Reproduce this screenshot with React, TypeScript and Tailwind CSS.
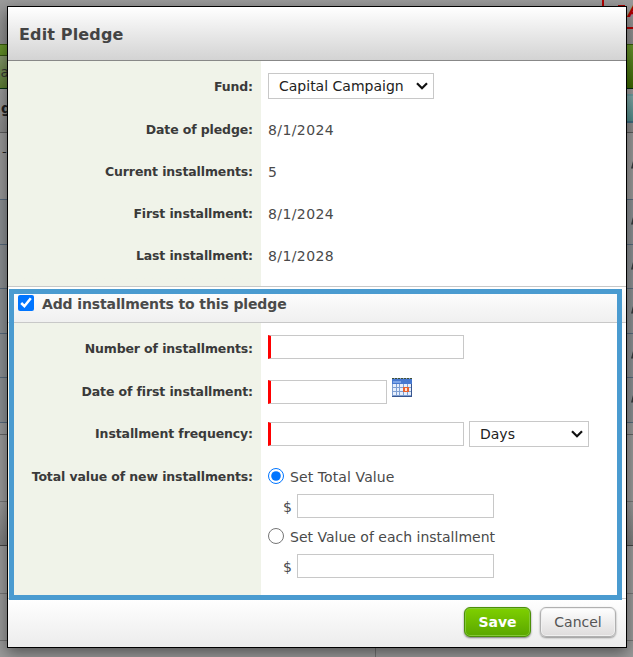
import React from "react";
import clsx from "clsx";

interface FieldProps {
  label: string;
  className: string;
  labelClass?: string;
  children: React.ReactNode;
}

interface BackdropRow {
  className: string;
  left?: string;
  pencil?: boolean;
}

// Ledger page dimmed behind the dialog, below the tab bar
const backdropRows: BackdropRow[] = [
  { className: "h-[67px] border-[#56697c] bg-[#989898]", left: "-", pencil: true },
  { className: "h-[45px] border-[#56697c] bg-[#8b8f92]", pencil: true },
  { className: "h-[44px] border-[#56697c] bg-[#8b8f92]", pencil: true },
  { className: "h-[45px] border-[#56697c] bg-[#8b8f92]", pencil: true },
  { className: "h-[44px] border-[#56697c] bg-[#8b8f92]", pencil: true },
  { className: "h-[45px] border-[#56697c] bg-[#8b8f92]", pencil: true },
  { className: "h-[12px] border-[#656565] bg-[#989898]" },
  { className: "h-[67px] border-[#777] bg-[#9a9a9a]" },
  { className: "h-[44px] border-[#444] bg-linear-to-b from-[#9a9a9a] to-[#7c7c7c]" },
  { className: "h-[48px] border-[#777] bg-[#9a9a9a]" },
  { className: "h-[47px] border-[#737373] bg-[#9a9a9a]" },
];

const Backdrop = () => (
  <div className="flex h-[657px] flex-col overflow-hidden">
    <div className="flex h-[44px] shrink-0 justify-end bg-linear-to-b from-[#9b9b9b] to-[#8c8c8c]">
      <div className="flex h-[29px] w-[31px] gap-[3px] overflow-hidden border-b-2 border-l-2 border-[#b00000] pl-[14px] text-[17px] leading-[22px] font-bold whitespace-nowrap text-[#b00000]">
        <span className="mt-[5px] h-[2px] w-[7px] shrink-0 bg-[#a50000]" />
        <span className="italic">A</span>
      </div>
    </div>
    <div className="flex h-[45px] shrink-0 overflow-hidden border-y border-t-[#385e09] border-b-[#012b13] bg-linear-to-b from-[#68952c] to-[#3b6600]">
      <div className="mt-[10px] w-[8px] border-t border-[#304f0e] bg-linear-to-b from-[#84966b] to-[#5b7d31] text-[14px] leading-[32px] text-[#333]">
        <span className="-ml-[8px] tracking-[-0.5px]">ga</span>
      </div>
    </div>
    <div className="flex h-[44px] shrink-0 items-center justify-between overflow-hidden border-b border-[#5c5c5c] bg-linear-to-b from-[#9b9b9b] to-[#8a8a8a]">
      <span className="-mt-[4px] pl-px text-[14px] font-bold text-[#222] underline">g</span>
      <span className="-mt-[4px] h-[29px] w-[6px] border-y-2 border-y-[#6c9da0] border-b-[#3e6b80] bg-linear-to-b from-[#7fa7a6] to-[#4e8a88]" />
    </div>
    {backdropRows.map((row, i) => (
      <div
        key={i}
        className={clsx("flex shrink-0 items-center justify-between border-b", row.className)}
      >
        <span className="-mt-[28px] w-[8px] pl-[2px] text-[13px] text-[#222]">{row.left}</span>
        {row.pencil && (
          <svg width="2" height="8" viewBox="0 0 2 8" className="-mt-[2px]">
            <path d="M2 0L0 7.5H2Z" fill="#35393b" />
          </svg>
        )}
      </div>
    ))}
    <div className="flex grow bg-[#9a9a9a]">
      <div className="w-[376px] border-r border-[#737373]" />
    </div>
  </div>
);

const Field = ({ label, className, labelClass = "items-center", children }: FieldProps) => (
  <div className={clsx("flex", className)}>
    <div
      className={clsx(
        "flex w-[253px] shrink-0 justify-end bg-[#f0f3e9] pr-[8px] text-[12.5px] font-bold tracking-[-0.12px] whitespace-nowrap text-[#3a3a3a]",
        labelClass
      )}
    >
      {label}
    </div>
    <div className="flex grow items-center pl-[7px]">{children}</div>
  </div>
);

const Select = ({ value, className }: { value: string; className: string }) => (
  <button
    className={clsx(
      "flex h-[26px] items-center justify-between border border-[#c8c8c8] bg-white pr-[5px] pl-[10px] text-[14px] text-[#222]",
      className
    )}
  >
    <span className="pt-px">{value}</span>
    <svg width="12" height="8" viewBox="0 0 12 8" fill="none">
      <path d="M1 1.2L6 6.2L11 1.2" stroke="#111" strokeWidth="2.2" />
    </svg>
  </button>
);

const TextInput = ({ className, required }: { className: string; required?: boolean }) => (
  <input
    type="text"
    className={clsx(
      "h-[24px] border border-[#c8c8c8] bg-white px-1 text-[14px] outline-none",
      required && "border-l-3 border-l-[#f00]",
      className
    )}
  />
);

const CalendarIcon = () => (
  <svg width="20" height="19" viewBox="0 0 20 19" className="mb-[9px] ml-[5px]" shapeRendering="crispEdges">
    <rect width="20" height="19" fill="#38558e" />
    <rect width="19" height="18" fill="#7f9fd2" />
    <rect y="1" width="20" height="5" fill="#4678d0" />
    <rect x="1" y="3" width="8" height="2" fill="#7ba3e6" />
    <path d="M0 .5H20" stroke="#405132" strokeDasharray="2 1" />
    {[6, 10, 14].map((y) =>
      [1, 5, 8, 12, 16].map((x) => (
        <rect key={`${x}-${y}`} x={x} y={y} width={x === 5 ? 2 : 3} height="3" fill="#e6eefc" />
      ))
    )}
    <rect x="11" y="9" width="6" height="5" fill="#e8622f" />
    <rect x="13" y="10" width="2" height="3" fill="#ffe0d2" />
  </svg>
);

export default function App() {
  return (
    <div className="relative h-[657px] w-[633px] overflow-hidden font-['DejaVu_Sans',Verdana,sans-serif] text-[14px] text-[#4a4a4a]">
      <Backdrop />

      <div className="absolute top-[6px] left-[7px] flex h-[642px] w-[620px] flex-col border border-black bg-white shadow-[0_5px_14px_0_rgba(0,0,0,0.45)]">
        {/* Header */}
        <div className="flex h-[54px] shrink-0 items-center border-b border-[#888] bg-linear-to-b from-white to-[#d3d3d3] pl-[11px]">
          <h2 className="mt-[2px] text-[16px] font-bold tracking-[0.15px] text-[#444]">Edit Pledge</h2>
        </div>

        {/* Current pledge */}
        <div className="h-[226px] shrink-0 border-b border-[#c8c8c8] bg-linear-to-r from-[#f0f3e9] from-[253px] to-white to-[253px] pt-[4px] tracking-[0.4px]">
          <Field label="Fund:" className="h-[42px]" labelClass="items-center pt-[2px]">
            <Select value="Capital Campaign" className="w-[166px] tracking-normal" />
          </Field>
          <Field label="Date of pledge:" className="h-[45px]" labelClass="items-center pt-[2px]">
            <span className="pt-[2px]">8/1/2024</span>
          </Field>
          <Field label="Current installments:" className="h-[40px]">5</Field>
          <Field label="First installment:" className="h-[44px]" labelClass="items-center pt-px">
            <span className="pt-px">8/1/2024</span>
          </Field>
          <Field label="Last installment:" className="h-[41px]">8/1/2028</Field>
        </div>

        {/* New installments */}
        <div className="flex h-[36px] shrink-0 items-center border-b border-[#c8c8c8] bg-linear-to-b from-white to-[#f0f0f0] pl-[10px] text-[14px] font-bold tracking-[-0.12px]">
          <input type="checkbox" defaultChecked className="mt-[-3px] mr-[8px] h-4 w-4" />
          <span className="-mt-[1px]">Add installments to this pledge</span>
        </div>
        <Field label="Number of installments:" className="h-[48px] shrink-0" labelClass="items-center pt-[4px]">
          <TextInput required className="w-[196px]" />
        </Field>
        <Field label="Date of first installment:" className="h-[42px] shrink-0">
          <TextInput required className="w-[119px]" />
          <CalendarIcon />
        </Field>
        <Field label="Installment frequency:" className="h-[42px] shrink-0">
          <TextInput required className="w-[196px]" />
          <Select value="Days" className="ml-[5px] w-[120px]" />
        </Field>
        <Field
          label="Total value of new installments:"
          className="h-[143px] shrink-0"
          labelClass="items-start pt-[13px]"
        >
          <div className="flex flex-col self-start pt-[11px]">
            <label className="flex h-[20px] items-center gap-[6px]">
              <input type="radio" name="value" defaultChecked className="h-4 w-4" />
              <span className="pt-[2px] tracking-[0.1px]">Set Total Value</span>
            </label>
            <div className="flex h-[40px] items-center gap-[5px] pl-[15px]">
              <span className="w-[9px] pt-[2px]">$</span>
              <TextInput className="w-[197px]" />
            </div>
            <label className="flex h-[20px] items-center gap-[6px]">
              <input type="radio" name="value" className="h-4 w-4" />
              <span className="pt-[2px]">Set Value of each installment</span>
            </label>
            <div className="flex h-[40px] items-center gap-[5px] pl-[15px]">
              <span className="w-[9px] pt-[2px]">$</span>
              <TextInput className="w-[197px]" />
            </div>
          </div>
        </Field>

        {/* Footer */}
        <div className="flex grow items-start justify-end gap-[9px] border-t border-[#c8c8c8] bg-linear-to-b from-white to-[#ececec] pt-[8px] pr-[10px]">
          <button className="h-[30px] w-[67px] rounded-[6px] border border-[#4b8f08] bg-linear-to-b from-[#7fd000] to-[#5aa700] text-[14px] font-bold text-white shadow-[0_1px_2px_rgba(0,0,0,0.5),inset_0_0_0_1px_#84c936]">
            Save
          </button>
          <button className="h-[30px] w-[76px] rounded-[6px] border border-[#b0b0b0] bg-linear-to-b from-white to-[#dedcdc] text-[14px] text-[#555] shadow-[0_1px_2px_rgba(0,0,0,0.4),inset_0_0_0_1px_#f0f0f0]">
            Cancel
          </button>
        </div>

        {/* Highlight around the new installments section */}
        <div className="pointer-events-none absolute top-[282px] left-[1px] h-[311px] w-[613px] border-5 border-[#4a9bd0]" />
      </div>
    </div>
  );
}
